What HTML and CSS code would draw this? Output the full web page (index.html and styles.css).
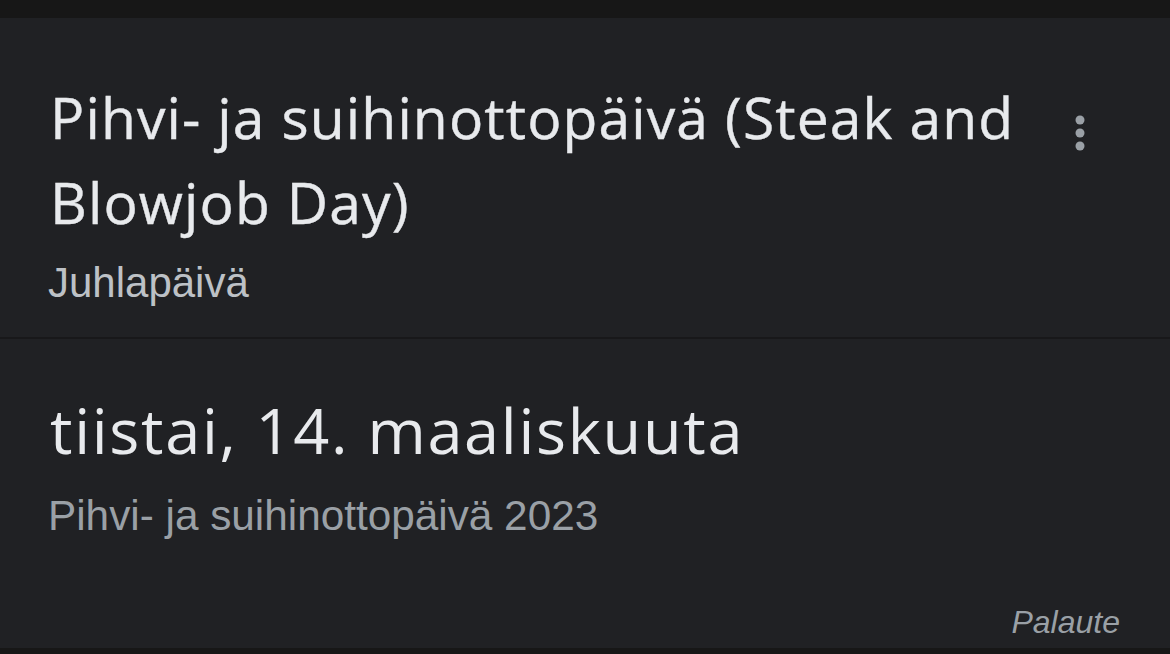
FILE: index.html
```html
<!DOCTYPE html>
<html lang="fi">
<head>
<meta charset="utf-8">
<link rel="stylesheet" href="styles.css">
</head>
<body>
<div class="topbar"></div>
<section class="card head">
  <div class="head-text">
    <h1 class="title">Pihvi- ja suihinottopäivä (Steak and Blowjob Day)</h1>
    <div class="kind">Juhlapäivä</div>
  </div>
  <div class="kebab" aria-label="Lisää">
    <svg width="16" height="40" viewBox="0 0 16 40"><circle cx="8" cy="7" r="4.5" fill="#9aa0a6"/><circle cx="8" cy="20" r="4.5" fill="#9aa0a6"/><circle cx="8" cy="33" r="4.5" fill="#9aa0a6"/></svg>
  </div>
</section>
<div class="divider"></div>
<section class="card date">
  <div class="date-main">tiistai, 14. maaliskuuta</div>
  <div class="date-sub">Pihvi- ja suihinottopäivä 2023</div>
</section>
<footer class="feedback"><span>Palaute</span></footer>
<div class="bottombar"></div>
</body>
</html>
```
FILE: styles.css
```css
html, body {
  margin: 0;
  padding: 0;
  background: #202124;
  height: 100%;
  overflow: hidden;
}
body {
  display: flex;
  flex-direction: column;
}
.topbar {
  height: 18px;
  background: #171717;
  flex: none;
}
.card {
  padding-left: 50px;
  padding-right: 50px;
}
.head {
  display: flex;
  align-items: flex-start;
  height: 319px;
  box-sizing: border-box;
  padding-top: 57px;
  flex: none;
}
.head-text {
  flex: 1;
  min-width: 0;
}
.title {
  margin: 0;
  font-family: "Open Sans", sans-serif;
  font-weight: 400;
  font-size: 57px;
  line-height: 85px;
  letter-spacing: 1.1px;
  color: #e8eaed;
  -webkit-text-stroke: 0.4px #e8eaed;
}
.kind {
  margin-top: 13px;
  font-family: "Liberation Sans", Arial, sans-serif;
  font-size: 42px;
  line-height: 50px;
  color: #bdc1c6;
  margin-left: -2px;
}
.kebab {
  width: 16px;
  flex: none;
  margin-left: 10px;
  margin-right: 32px;
  margin-top: 38px;
}
.kebab svg {
  display: block;
}
.divider {
  height: 2px;
  background: #18181a;
  flex: none;
}
.date {
  padding-top: 53px;
}
.date-main {
  font-family: "Open Sans", sans-serif;
  font-size: 63px;
  line-height: 75px;
  letter-spacing: 1.7px;
  color: #e8eaed;
}
.date-sub {
  margin-top: 24px;
  font-family: "Liberation Sans", Arial, sans-serif;
  font-size: 42.3px;
  line-height: 50px;
  color: #9aa0a6;
  margin-left: -2px;
}
.feedback {
  margin-top: auto;
  display: flex;
  justify-content: flex-end;
  padding-right: 50px;
  padding-bottom: 8px;
}
.feedback span {
  font-family: "Liberation Sans", Arial, sans-serif;
  font-style: italic;
  font-size: 32px;
  line-height: 36px;
  color: #9aa0a6;
}
.bottombar {
  height: 6px;
  background: #171717;
  flex: none;
}
```
